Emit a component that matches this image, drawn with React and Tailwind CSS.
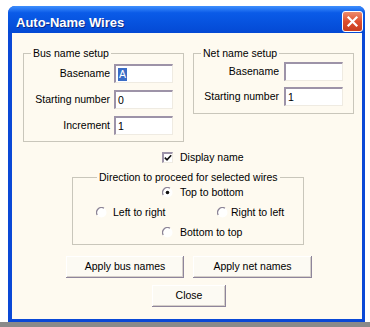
import React from "react";

const inputCls =
  "w-[59px] h-[19px] bg-white border-t-2 border-l-2 border-r border-b border-t-[#9d93a8] border-l-[#9d93a8] border-r-[#efebe2] border-b-[#efebe2] flex items-center pl-[2px] leading-none";

const btnCls =
  "h-[22px] flex items-center justify-center bg-[#fcfaf3] shadow-[inset_-1px_-1px_0_#8e859b,inset_1px_1px_0_#ffffff,inset_-2px_-2px_0_#d5cfc9] text-black";

function Radio({ checked }) {
  return (
    <svg width="11" height="11" viewBox="0 0 11 11" className="shrink-0">
      <circle cx="5.5" cy="5.5" r="5" fill="#ffffff" />
      <path d="M1.2 8 A5 5 0 0 1 8 1.2" fill="none" stroke="#8d8597" strokeWidth="1.3" />
      <path d="M2.6 8.9 A4 4 0 0 1 8.9 2.6" fill="none" stroke="#c7c1cc" strokeWidth="0.8" opacity="0" />
      {checked && <circle cx="5.5" cy="5.5" r="1.8" fill="#111111" />}
    </svg>
  );
}

function Checkbox() {
  return (
    <div className="w-[11px] h-[11px] bg-white border-t-2 border-l-2 border-r border-b border-t-[#9d93a8] border-l-[#9d93a8] border-r-[#efebe2] border-b-[#efebe2] flex items-center justify-center shrink-0">
      <svg width="8" height="8" viewBox="0 0 8 8">
        <path d="M0.8 3.6 L3 5.8 L7.2 1.2" fill="none" stroke="#111" strokeWidth="1.6" />
      </svg>
    </div>
  );
}

export default function App() {
  return (
    <div className="w-[370px] h-[327px] bg-white flex flex-col overflow-hidden font-['Liberation_Sans',Arial,sans-serif] text-[10.5px] text-black">
      <div className="ml-[8px] mt-[6px] w-[357px] h-[316px] flex flex-col rounded-t-[7px] overflow-hidden bg-[#0a48d6]">
        {/* Title bar */}
        <div className="h-[27px] shrink-0 flex items-start justify-between pl-[8px] pr-[2px] bg-linear-to-b from-[#3e8ffd] from-0% via-[#0a5be8] via-25% to-[#0449d4]">
          <span className="mt-[9px] leading-[15px] text-[13px] font-bold text-white [text-shadow:1px_1px_0_#0b2a8a]">
            Auto-Name Wires
          </span>
          <div className="mt-[5px] w-[21px] h-[21px] rounded-[3px] border border-white bg-linear-to-b from-[#ec8a6c] via-[#de4e2e] to-[#c83c1e] flex items-center justify-center">
            <svg width="13" height="13" viewBox="0 0 13 13">
              <path d="M2.5 2.5 L10.5 10.5 M10.5 2.5 L2.5 10.5" stroke="#ffffff" strokeWidth="2.2" strokeLinecap="square" />
            </svg>
          </div>
        </div>
        {/* Client area */}
        <div className="flex-1 ml-[4px] mr-[3px] mb-[3px] bg-[#fefaf0] flex flex-col">
          {/* Top row */}
          <div className="mt-[14px] pl-[11px] flex items-start gap-[9px]">
            <fieldset className="w-[161px] h-[95px] border border-[#c9c6bb] px-0 pt-[4px] pb-0 m-0 flex flex-col gap-[7px]">
              <legend className="ml-[7px] px-[2px] leading-[13px]">Bus name setup</legend>
              <div className="flex justify-end items-center gap-[4px] pr-[10px]">
                <span>Basename</span>
                <div className={inputCls}>
                  <span className="bg-[#3a6cc6] text-white px-[1px] leading-[13px]">A</span>
                </div>
              </div>
              <div className="flex justify-end items-center gap-[4px] pr-[10px]">
                <span>Starting number</span>
                <div className={inputCls}>0</div>
              </div>
              <div className="flex justify-end items-center gap-[4px] pr-[10px]">
                <span>Increment</span>
                <div className={inputCls}>1</div>
              </div>
            </fieldset>
            <fieldset className="w-[161px] h-[67px] border border-[#c9c6bb] px-0 pt-[2px] pb-0 m-0 flex flex-col gap-[6px]">
              <legend className="ml-[7px] px-[2px] leading-[13px]">Net name setup</legend>
              <div className="flex justify-end items-center gap-[5px] pr-[10px]">
                <span>Basename</span>
                <div className={inputCls + " w-[58px]"}></div>
              </div>
              <div className="flex justify-end items-center gap-[5px] pr-[10px]">
                <span>Starting number</span>
                <div className={inputCls + " w-[58px]"}>1</div>
              </div>
            </fieldset>
          </div>
          {/* Display name */}
          <div className="mt-[9px] pl-[150px] flex items-center gap-[7px] h-[13px]">
            <Checkbox />
            <span>Display name</span>
          </div>
          {/* Direction */}
          <fieldset className="mt-[7px] ml-[60px] w-[232px] h-[74px] border border-[#c9c6bb] px-0 pt-[2px] pb-0 m-0 flex flex-col gap-[7px]">
            <legend className="ml-[24px] px-[2px] leading-[13px]">Direction to proceed for selected wires</legend>
            <div className="h-[13px] pl-[89px] flex items-center gap-[7px]">
              <Radio checked />
              <span>Top to bottom</span>
            </div>
            <div className="h-[13px] pl-[23px] flex items-center">
              <div className="w-[121px] flex items-center gap-[6px]">
                <Radio />
                <span>Left to right</span>
              </div>
              <div className="flex items-center gap-[3px]">
                <Radio />
                <span>Right to left</span>
              </div>
            </div>
            <div className="h-[13px] pl-[89px] flex items-center gap-[7px]">
              <Radio />
              <span>Bottom to top</span>
            </div>
          </fieldset>
          {/* Buttons */}
          <div className="mt-[11px] pl-[54px] flex gap-[9px]">
            <div className={btnCls + " w-[118px]"}>Apply bus names</div>
            <div className={btnCls + " w-[119px]"}>Apply net names</div>
          </div>
          <div className="mt-[7px] pl-[140px] flex">
            <div className={btnCls + " w-[74px]"}>Close</div>
          </div>
        </div>
      </div>
      <div className="h-[5px] bg-[#8a8a8a]"></div>
    </div>
  );
}
